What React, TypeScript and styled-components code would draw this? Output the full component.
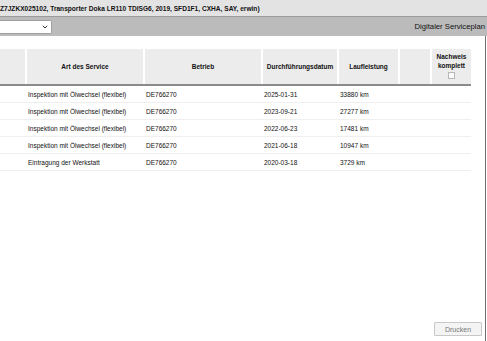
import React from 'react';
import styled, { createGlobalStyle } from 'styled-components';

const GlobalStyle = createGlobalStyle`
  html, body {
    margin: 0;
    padding: 0;
    background: #fff;
    font-family: "Liberation Sans", Arial, sans-serif;
    color: #111;
  }
`;

const COLS = '25px 116px 116px 74px 59px 30px 39px';

const Page = styled.div`
  width: 487px;
  height: 341px;
  display: flex;
  flex-direction: column;
  overflow: hidden;
`;

const TitleBar = styled.div`
  height: 16px;
  background: #e3e3e3;
  font-size: 6.6px;
  font-weight: bold;
  display: flex;
  align-items: center;
  white-space: nowrap;
  border-bottom: 1px solid #9a9a9a;
`;

const ToolBar = styled.div`
  height: 19px;
  background: #bbbbbb;
  display: flex;
  align-items: center;
  justify-content: space-between;
  padding-right: 2px;
`;

const Select = styled.div`
  width: 52px;
  height: 14px;
  background: #fff;
  border: 1px solid #a0a0a0;
  border-left: none;
  border-radius: 0 2px 2px 0;
  display: flex;
  align-items: center;
  justify-content: flex-end;
  padding-right: 3px;
  box-sizing: border-box;
`;

const ModuleName = styled.span`
  font-size: 7.7px;
  color: #111;
`;

const Content = styled.div`
  flex: 1;
  display: flex;
  flex-direction: column;
  border-right: 1px solid #6f6f6f;
  margin-right: 1px;
  padding-top: 13px;
`;

const Table = styled.div`
  width: 471px;
  font-size: 6.5px;
`;

const HeaderRow = styled.div`
  display: grid;
  grid-template-columns: ${COLS};
  column-gap: 2px;
  height: 35px;
  border-bottom: 2px solid #8b8b8b;
`;

const HeaderCell = styled.div<{ $top?: boolean }>`
  background: #ececec;
  font-weight: bold;
  display: flex;
  flex-direction: column;
  align-items: center;
  justify-content: ${p => (p.$top ? 'flex-start' : 'center')};
  padding-top: ${p => (p.$top ? '3px' : '0')};
  text-align: center;
  line-height: 9px;
`;

const Check = styled.span`
  width: 7px;
  height: 7px;
  margin-top: 2px;
  border: 1px solid #b8b8b8;
  background: #fafafa;
  box-sizing: border-box;
`;

const Row = styled.div`
  display: grid;
  grid-template-columns: ${COLS};
  column-gap: 2px;
  height: 17px;
  align-items: center;
  border-bottom: 1px solid #efefef;
  box-sizing: border-box;
`;

const Cell = styled.div`
  padding-left: 1px;
  white-space: nowrap;
`;

const Footer = styled.div`
  margin-top: auto;
  display: flex;
  justify-content: flex-end;
  padding: 0 3px 5px 0;
`;

const Button = styled.button`
  width: 48px;
  height: 14px;
  padding: 0;
  font-family: "Liberation Sans", Arial, sans-serif;
  font-size: 7px;
  color: #777;
  background: #f4f4f4;
  border: 1px solid #c8c8c8;
  border-radius: 1px;
`;

const rows = [
  { art: 'Inspektion mit Ölwechsel (flexibel)', betrieb: 'DE766270', datum: '2025-01-31', km: '33880 km' },
  { art: 'Inspektion mit Ölwechsel (flexibel)', betrieb: 'DE766270', datum: '2023-09-21', km: '27277 km' },
  { art: 'Inspektion mit Ölwechsel (flexibel)', betrieb: 'DE766270', datum: '2022-06-23', km: '17481 km' },
  { art: 'Inspektion mit Ölwechsel (flexibel)', betrieb: 'DE766270', datum: '2021-06-18', km: '10947 km' },
  { art: 'Eintragung der Werkstatt', betrieb: 'DE766270', datum: '2020-03-18', km: '3729 km' },
];

export default function App() {
  return (
    <Page>
      <GlobalStyle />
      <TitleBar>Z7JZKX025102, Transporter Doka LR110 TDISG6, 2019, SFD1F1, CXHA, SAY, erwin)</TitleBar>
      <ToolBar>
        <Select>
          <svg width="6" height="4" viewBox="0 0 6 4">
            <path d="M0.8 0.8 L3 3 L5.2 0.8" fill="none" stroke="#333" strokeWidth="1" />
          </svg>
        </Select>
        <ModuleName>Digitaler Serviceplan</ModuleName>
      </ToolBar>
      <Content>
        <Table>
          <HeaderRow>
            <HeaderCell />
            <HeaderCell>Art des Service</HeaderCell>
            <HeaderCell>Betrieb</HeaderCell>
            <HeaderCell>Durchführungsdatum</HeaderCell>
            <HeaderCell>Laufleistung</HeaderCell>
            <HeaderCell />
            <HeaderCell $top>
              <span>Nachweis</span>
              <span>komplett</span>
              <Check />
            </HeaderCell>
          </HeaderRow>
          {rows.map((r, i) => (
            <Row key={i}>
              <Cell />
              <Cell>{r.art}</Cell>
              <Cell>{r.betrieb}</Cell>
              <Cell>{r.datum}</Cell>
              <Cell>{r.km}</Cell>
              <Cell />
              <Cell />
            </Row>
          ))}
        </Table>
        <Footer>
          <Button>Drucken</Button>
        </Footer>
      </Content>
    </Page>
  );
}
